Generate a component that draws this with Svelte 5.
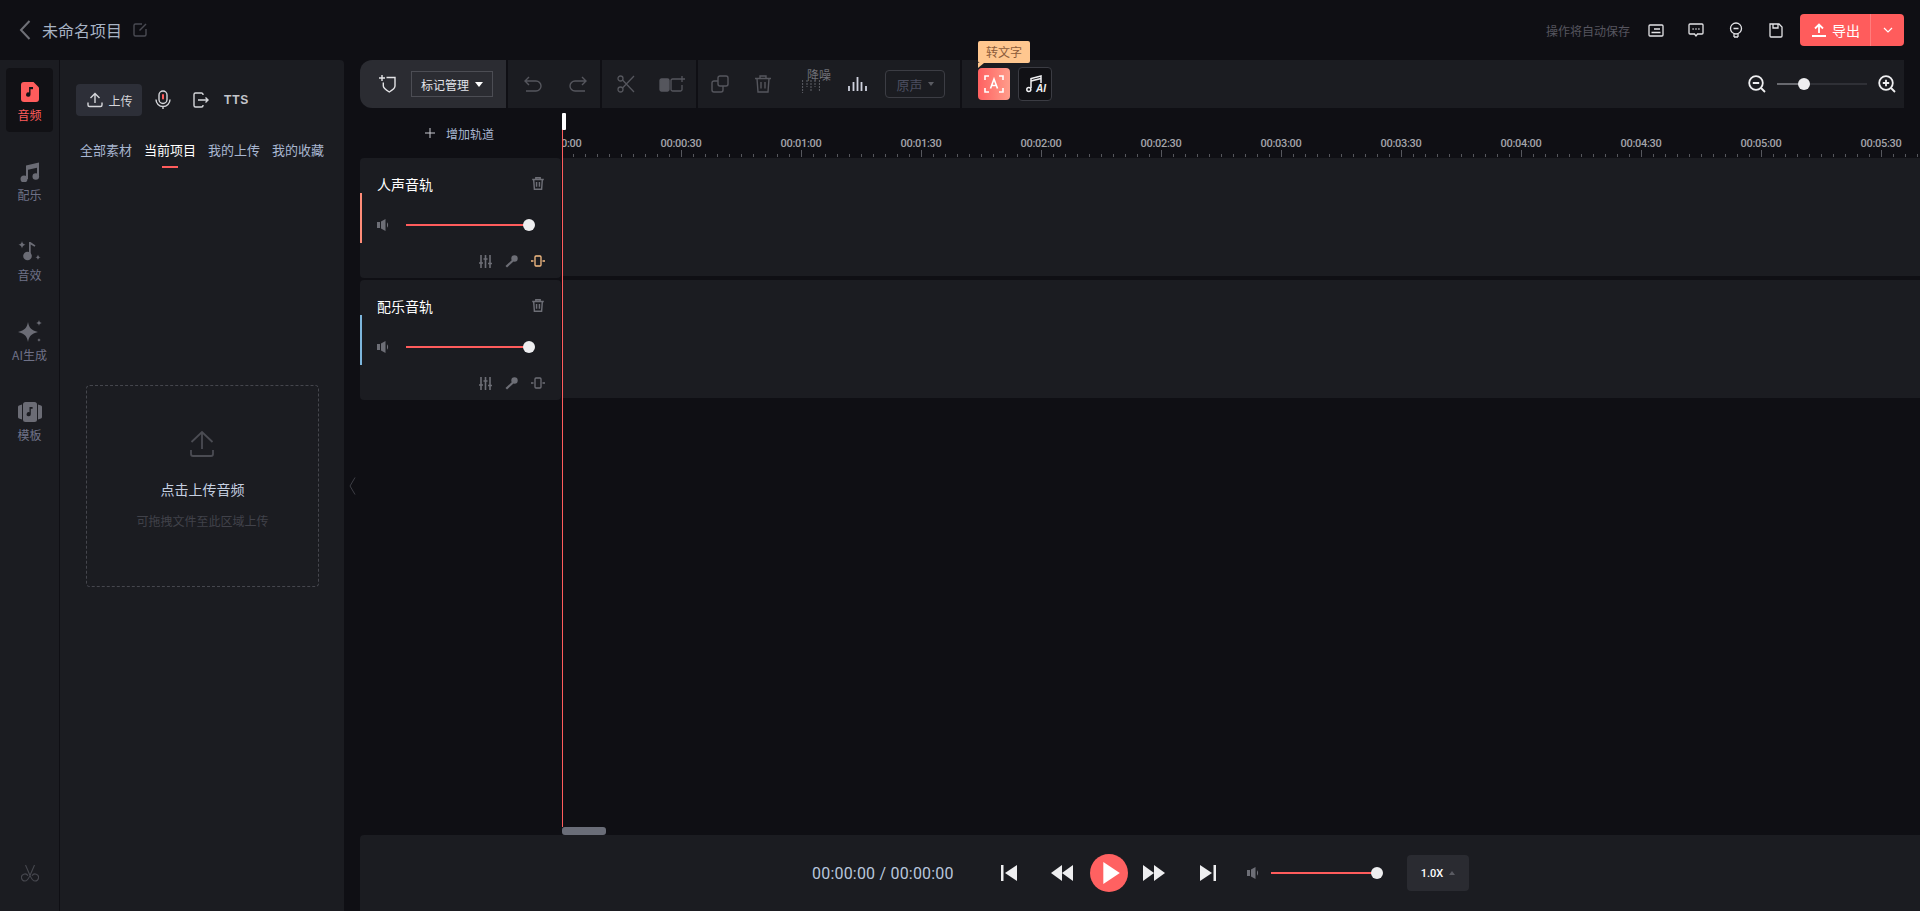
<script>
    const tabs = ["全部素材", "当前项目", "我的上传", "我的收藏"];
    const tracks = [
        { name: "人声音轨", color: "#ff8c78", clipColor: "#f7bd84" },
        { name: "配乐音轨", color: "#7db6dc", clipColor: "#6d6e76" },
    ];
    const marks = [
        "00:00:00", "00:00:30", "00:01:00", "00:01:30", "00:02:00", "00:02:30",
        "00:03:00", "00:03:30", "00:04:00", "00:04:30", "00:05:00", "00:05:30",
    ];
</script>

<div class="page">
    <header class="top">
        <div class="top-left">
            <svg class="back" width="12" height="20" viewBox="0 0 12 20" fill="none" stroke="#6f7077" stroke-width="2"><path d="M10.5 1 2 10l8.5 9" /></svg>
            <span class="title">未命名项目</span>
            <svg width="14" height="14" viewBox="0 0 14 14" fill="none" stroke="#4a4b53" stroke-width="1.4"><path d="M9 1H2.500A1.500 1.500 0 0 0 1 2.500v9A1.500 1.500 0 0 0 2.500 13h9a1.500 1.500 0 0 0 1.500-1.500V6" /><path d="M6.500 7.500 13 1" /></svg>
        </div>
        <div class="top-right">
            <span class="autosave">操作将自动保存</span>
            <button class="top-icon" aria-label="字幕">
                <svg width="16" height="13" viewBox="0 0 16 13" fill="none" stroke="#e3e3e6" stroke-width="1.300"><rect x="1" y="1" width="14" height="11" rx="1" /><path d="M6 5h6M3.500 8.500h9" /></svg>
            </button>
            <button class="top-icon" aria-label="反馈">
                <svg width="16" height="15" viewBox="0 0 16 15" fill="none" stroke="#e3e3e6" stroke-width="1.300"><path d="M2 1h12a1 1 0 0 1 1 1v8a1 1 0 0 1-1 1H9.500L8 13 6.500 11H2a1 1 0 0 1-1-1V2a1 1 0 0 1 1-1z" /><path d="M4.500 6h1.200M7.400 6h1.200M10.300 6h1.200" /></svg>
            </button>
            <button class="top-icon" aria-label="提示">
                <svg width="14" height="16" viewBox="0 0 14 16" fill="none" stroke="#e3e3e6" stroke-width="1.300"><circle cx="7" cy="6.500" r="5.500" /><path d="M5 15h4M5 12v3M9 12v3M4.500 6.500h5" /></svg>
            </button>
            <button class="top-icon" aria-label="保存">
                <svg width="14" height="15" viewBox="0 0 14 15" fill="none" stroke="#e3e3e6" stroke-width="1.300"><path d="M1 1h9l3 3v9a1 1 0 0 1-1 1H2a1 1 0 0 1-1-1z" /><path d="M4 1v4h5V1" /></svg>
            </button>
            <div class="export">
                <button class="export-main">
                    <svg width="14" height="14" viewBox="0 0 14 14" fill="none" stroke="#fff" stroke-width="1.800"><path d="M7 10V1.500M3 5.500l4-4 4 4M0 13h14" /></svg>
                    导出
                </button>
                <button class="export-more" aria-label="更多">
                    <svg width="10" height="6" viewBox="0 0 10 6" fill="none" stroke="#fff" stroke-width="1.200"><path d="m1 1 4 4 4-4" /></svg>
                </button>
            </div>
        </div>
    </header>

    <div class="main">
        <aside class="side">
            <nav class="nav">
                <div class="nav-item active">
                    <svg width="18" height="20" viewBox="0 0 18 20"><path d="M3 0h9.500L18 5.500V17a3 3 0 0 1-3 3H3a3 3 0 0 1-3-3V3a3 3 0 0 1 3-3z" fill="#ff5c5c" /><path d="M9.500 5v7.500a2.200 2.200 0 1 1-1.400-2V5z" fill="#111115" /><path d="M9 5h3v2.200H9z" fill="#111115" /></svg>
                    <span>音频</span>
                </div>
                <div class="nav-item">
                    <svg width="20" height="20" viewBox="0 0 20 20" fill="#6b6c75"><path d="M6 3.500 19 .5v14h-2V5.800L8 7.800V17H6z" /><circle cx="4" cy="17" r="3.500" /><circle cx="15.800" cy="14.500" r="3.300" /></svg>
                    <span>配乐</span>
                </div>
                <div class="nav-item">
                    <svg width="24" height="22" viewBox="0 0 24 22" fill="#6b6c75"><path d="M4 0c.4 2.300 1.200 3.200 3.500 3.800C5.200 4.300 4.500 5.200 4 7.600c-.5-2.400-1.200-3.300-3.500-3.800C2.800 3.200 3.600 2.300 4 0z" /><path d="M20 13.500c.3 1.700.9 2.400 2.800 2.800-1.900.4-2.500 1.100-2.800 2.800-.3-1.700-.9-2.400-2.800-2.800 1.900-.4 2.500-1.100 2.800-2.800z" /><path d="M11 1h1.500l5 3.500-1 1.300-3.800-2.400V15h-1.700z" /><circle cx="9.500" cy="15" r="4.300" /></svg>
                    <span>音效</span>
                </div>
                <div class="nav-item">
                    <svg width="24" height="24" viewBox="0 0 24 24" fill="#6b6c75"><path d="M10 2c1.100 6 3 8 10 10-7 2-8.900 4-10 10C8.900 16 7 14 0 12c7-2 8.900-4 10-10z" /><path d="M21 0c.3 1.700.9 2.400 2.800 3C21.900 3.500 21.300 4.200 21 6c-.3-1.800-.9-2.500-2.800-3C20.100 2.400 20.700 1.700 21 0z" /><path d="M21 18c.2 1.200.6 1.700 2 2-1.400.3-1.800.8-2 2-.2-1.200-.6-1.700-2-2 1.400-.3 1.800-.8 2-2z" /></svg>
                    <span>AI生成</span>
                </div>
                <div class="nav-item">
                    <svg width="24" height="22" viewBox="0 0 24 22"><path d="M4 3.500v15L1 17.500a1.500 1.500 0 0 1-1-1.400V5.900a1.500 1.500 0 0 1 1-1.400zM20 3.500v15l3-1a1.500 1.500 0 0 0 1-1.400V5.900a1.500 1.500 0 0 0-1-1.400z" fill="#6b6c75" /><rect x="5" y="1" width="14" height="20" rx="2.500" fill="#6b6c75" /><path d="M12.800 6v7.200a2.100 2.100 0 1 1-1.300-1.900V6z" fill="#1b1c21" /><path d="M12 6h2.600v1.800H12z" fill="#1b1c21" /></svg>
                    <span>模板</span>
                </div>
                <svg class="nav-cut" width="18" height="20" viewBox="0 0 18 20" fill="none" stroke="#46474e" stroke-width="1.100"><path d="M4.500 0 9 10.500c1.500 3 2.300 5.500 5 5.500a3.500 3.500 0 1 0-3-5.200M13.500 0 9 10.500c-1.500 3-2.300 5.500-5 5.500a3.500 3.500 0 1 1 3-5.200" /></svg>
            </nav>

            <section class="assets">
                <div class="asset-tools">
                    <button class="upload">
                        <svg width="16" height="16" viewBox="0 0 16 16" fill="none" stroke="#d5d6da" stroke-width="1.400"><path d="M8 11V1.500M3.500 6 8 1.500 12.500 6M1 10.500V13a1.500 1.500 0 0 0 1.500 1.500h11A1.500 1.500 0 0 0 15 13v-2.500" /></svg>
                        上传
                    </button>
                    <svg class="asset-mic" width="16" height="20" viewBox="0 0 16 20" fill="none" stroke="#d5d6da" stroke-width="1.400"><rect x="4" y="1" width="8" height="12.500" rx="4" /><rect x="7" y="4" width="2" height="5.500" rx="1" fill="#ff5c5c" stroke="none" /><path d="M1 9.500a7 7 0 0 0 14 0M8 16.500V19" /></svg>
                    <svg class="asset-tts" width="16" height="16" viewBox="0 0 16 16" fill="none" stroke="#d5d6da" stroke-width="1.400"><path d="M10 3V2.500A1.500 1.500 0 0 0 8.500 1h-6A1.500 1.500 0 0 0 1 2.500v11A1.500 1.500 0 0 0 2.500 15h6a1.500 1.500 0 0 0 1.500-1.500V13M5 8h10M12.500 5.500 15 8l-2.500 2.500" /></svg>
                    <span class="tts">TTS</span>
                </div>
                <div class="tabs">
                    {#each tabs as tab, i}
                        <div class="tab" class:on={i === 1}>{tab}</div>
                    {/each}
                </div>
                <div class="drop">
                    <svg width="24" height="28" viewBox="0 0 24 28" fill="none" stroke="#4b4c53" stroke-width="1.800"><path d="M12 19V2M1.500 12 12 2l10.500 10M1 20v4a2 2 0 0 0 2 2h18a2 2 0 0 0 2-2v-4" /></svg>
                    <p class="drop-title">点击上传音频</p>
                    <p class="drop-sub">可拖拽文件至此区域上传</p>
                </div>
            </section>
        </aside>

        <div class="gutter">
            <svg width="7" height="18" viewBox="0 0 7 18" fill="none" stroke="#3e3f46" stroke-width="1"><path d="M6 .5 1 9l5 8.500" /></svg>
        </div>

        <div class="work">
            <div class="toolbar">
                <div class="tb mark">
                    <svg width="18" height="18" viewBox="0 0 18 18" fill="none" stroke="#e4e4e7" stroke-width="1.400"><path d="M7.500 2.500H16v8.500c0 2-3.200 4.500-5.700 6-2.500-1.500-6-4-6-6V7.500" /><path d="M0 3h6M3 0v6" /></svg>
                    <button class="mark-btn">标记管理<i class="caret white"></i></button>
                </div>
                <div class="tb undo">
                    <button class="tool w45" aria-label="撤销">
                        <svg width="18" height="16" viewBox="0 0 18 16" fill="none" stroke="#55565d" stroke-width="1.400"><path d="M5 1 1 5l4 4M1 5h11a4.500 4.500 0 0 1 0 10H2" /></svg>
                    </button>
                    <button class="tool w45" aria-label="重做">
                        <svg width="18" height="16" viewBox="0 0 18 16" fill="none" stroke="#55565d" stroke-width="1.400"><path d="m13 1 4 4-4 4M17 5H6a4.500 4.500 0 0 0 0 10h10" /></svg>
                    </button>
                </div>
                <div class="tb cut">
                    <button class="tool w46" aria-label="剪切">
                        <svg width="18" height="18" viewBox="0 0 18 18" fill="none" stroke="#55565d" stroke-width="1.300"><circle cx="3.500" cy="3.500" r="2.500" /><circle cx="3.500" cy="14.500" r="2.500" /><path d="M5.500 5 17 17M5.500 13 17 1" /></svg>
                    </button>
                    <button class="tool w46" aria-label="添加片段">
                        <svg width="26" height="16" viewBox="0 0 26 16" fill="none" stroke="#55565d" stroke-width="1.300"><rect x="1" y="3" width="9" height="12" rx="1.500" fill="#55565d" /><path d="M20 3h-6.500A1.500 1.500 0 0 0 12 4.500v9a1.500 1.500 0 0 0 1.500 1.500h8a1.500 1.500 0 0 0 1.500-1.500V9M23 0v6M20 3h6" /></svg>
                    </button>
                </div>
                <div class="tb edit">
                    <button class="tool w44" aria-label="复制">
                        <svg width="18" height="18" viewBox="0 0 18 18" fill="none" stroke="#55565d" stroke-width="1.400"><rect x="7" y="1" width="10" height="10" rx="2" /><path d="M7 6H3a2 2 0 0 0-2 2v7a2 2 0 0 0 2 2h7a2 2 0 0 0 2-2v-4" /></svg>
                    </button>
                    <button class="tool w42" aria-label="删除">
                        <svg width="16" height="18" viewBox="0 0 16 18" fill="none" stroke="#55565d" stroke-width="1.400"><path d="M0 3.500h16M5 3.500V1h6v2.500M2 3.500 3 17h10l1-13.500M6 7v6.500M10 7v6.500" /></svg>
                    </button>
                    <div class="denoise">
                        <span>降噪</span>
                        <svg width="18" height="15" viewBox="0 0 18 15" stroke="#55565d" stroke-width="1.200"><path d="M.5 2v13M5 2v7M9 2v11M13 2v7M17.500 2v12" stroke-dasharray="2 1" /></svg>
                    </div>
                    <button class="tool w36" aria-label="音量均衡">
                        <svg width="19" height="14" viewBox="0 0 19 14" stroke="#cfd2de" stroke-width="1.800"><path d="M1 14V9M5.500 14V5M9.500 14V0M13.500 14V5M18 14V9" /></svg>
                    </button>
                    <button class="origin">原声<i class="caret grey"></i></button>
                </div>
                <div class="tb ai">
                    <div class="speech-wrap">
                        <span class="tip">转文字</span>
                        <button class="speech" aria-label="转文字">
                            <svg width="20" height="18" viewBox="0 0 20 18" fill="none" stroke="#fff" stroke-width="1.600"><path d="M1 5V1h4M15 1h4v4M1 13v4h4M15 17h4v-4" /><path d="M6.500 13.500 10 4l3.500 9.500M7.700 10.500h4.600" /></svg>
                        </button>
                    </div>
                    <button class="music-ai" aria-label="AI 音乐">
                        <svg width="18" height="18" viewBox="0 0 18 18" fill="none" stroke="#f1f1f3" stroke-width="1.500"><path d="M5 13V3.500L15 1v7" /><path d="M5 6l10-2.500" /><circle cx="2.800" cy="14.500" r="2" /></svg>
                        <span>AI</span>
                    </button>
                    <div class="zoom">
                        <svg width="18" height="18" viewBox="0 0 18 18" fill="none" stroke="#efeff1" stroke-width="1.800"><circle cx="8" cy="8" r="6.800" /><path d="M4.800 8h6.400M13 13l4 4" /></svg>
                        <div class="zoom-slider">
                            <div class="zoom-fill"></div>
                            <div class="knob"></div>
                        </div>
                        <svg width="18" height="18" viewBox="0 0 18 18" fill="none" stroke="#efeff1" stroke-width="1.800"><circle cx="8" cy="8" r="6.800" /><path d="M4.800 8h6.400M8 4.800v6.400M13 13l4 4" /></svg>
                    </div>
                </div>
            </div>

            <div class="timeline">
                <div class="heads">
                    <div class="add-track">
                        <svg width="10" height="10" viewBox="0 0 10 10" stroke="#c9cad0" stroke-width="1"><path d="M5 0v10M0 5h10" /></svg>
                        增加轨道
                    </div>
                    {#each tracks as track}
                        <div class="head" style="--bar: {track.color}">
                            <div class="head-top">
                                <span>{track.name}</span>
                                <svg width="12" height="13" viewBox="0 0 16 18" fill="none" stroke="#6d6e76" stroke-width="2"><path d="M0 3.500h16M5 3.500V1h6v2.500M2 3.500 3 17h10l1-13.500M6 7v6.500M10 7v6.500" /></svg>
                            </div>
                            <div class="head-vol">
                                <svg width="13" height="12" viewBox="0 0 13 12" fill="#6d6e76"><path d="M0 3h3v6H0zM4 2.500 8.500 0v12L4 9.500zM10 3.500c1.500.5 1.500 4.500 0 5z" /></svg>
                                <div class="slider"><div class="knob end"></div></div>
                            </div>
                            <div class="head-tools">
                                <svg width="13" height="13" viewBox="0 0 13 13" stroke="#6d6e76" stroke-width="1.600"><path d="M2 0v13M6.500 0v13M11 0v13M0 8h4M4.500 4h4M9 8.500h4" /></svg>
                                <svg width="13" height="13" viewBox="0 0 13 13" fill="#6d6e76"><circle cx="9.500" cy="3.500" r="3.200" /><path d="M7 5 0.500 11 2 12.500 8.500 6.500z" /></svg>
                                <svg width="14" height="12" viewBox="0 0 14 12" fill="none" stroke={track.clipColor} stroke-width="1.300"><rect x="4" y="1" width="6" height="10" rx="1" /><path d="M0 6h2.500M11.500 6H14" /></svg>
                            </div>
                        </div>
                    {/each}
                </div>
                <div class="lanes">
                    <div class="ruler">
                        <div class="marks">
                            {#each marks as mark}
                                <span>{mark}</span>
                            {/each}
                        </div>
                        <div class="ticks"></div>
                    </div>
                    <div class="lane"></div>
                    <div class="lane"></div>
                    <div class="thumb"></div>
                </div>
                <div class="playhead"></div>
            </div>

            <div class="player">
                <span class="time">00:00:00 / 00:00:00</span>
                <div class="transport">
                    <svg class="skip-prev" width="18" height="18" viewBox="0 0 18 18" fill="#eeeef0"><path d="M1 1h2.500v16H1zM17 1v16L5 9z" /></svg>
                    <svg class="rewind" width="24" height="18" viewBox="0 0 24 18" fill="#eeeef0"><path d="M12 1v16L1 9zM23 1v16L12 9z" /></svg>
                    <div class="play"><svg width="18" height="22" viewBox="0 0 16 20" fill="#fff"><path d="M1 0v20l15-10z" /></svg></div>
                    <svg class="forward" width="24" height="18" viewBox="0 0 24 18" fill="#eeeef0"><path d="M1 1v16l11-8zM12 1v16l11-8z" /></svg>
                    <svg class="skip-next" width="18" height="18" viewBox="0 0 18 18" fill="#eeeef0"><path d="M1 1v16l12-8zM14.500 1H17v16h-2.500z" /></svg>
                </div>
                <svg class="vol-icon" width="13" height="12" viewBox="0 0 13 12" fill="#6d6e76"><path d="M0 3h3v6H0zM4 2.500 8.500 0v12L4 9.500zM10 3.500c1.500.5 1.500 4.500 0 5z" /></svg>
                <div class="slider vol"><div class="knob end"></div></div>
                <button class="speed">1.0X<i class="caret up"></i></button>
            </div>
        </div>
    </div>
</div>

<style>
    :global(body) {
        background: #0f0f14;
        font-family: "Noto Sans CJK SC", "Noto Sans", sans-serif;
        overflow: hidden;
    }

    button {
        background: none;
        border: 0;
        padding: 0;
        font: inherit;
        color: inherit;
    }

    .page {
        height: 911px;
        display: flex;
        flex-direction: column;
        background: #0f0f14;
        color: #fff;
    }

    /* header */
    .top {
        height: 60px;
        flex: none;
        display: flex;
        align-items: center;
        justify-content: space-between;
        padding: 0 16px 0 19px;
    }

    .top-left {
        display: flex;
        align-items: center;
    }

    .title {
        margin: 0 11px;
        font-size: 16px;
        color: #a8b3c4;
    }

    .top-right {
        display: flex;
        align-items: center;
    }

    .autosave {
        font-size: 12px;
        color: #56555f;
        margin-right: 6px;
    }

    .top-icon {
        width: 40px;
        height: 32px;
        display: flex;
        align-items: center;
        justify-content: center;
    }

    .export {
        display: flex;
        height: 32px;
        margin-left: 4px;
        background: #ff5c5c;
        border-radius: 4px;
    }

    .export-main {
        width: 71px;
        padding-left: 12px;
        display: flex;
        align-items: center;
        gap: 6px;
        font-size: 14px;
        border-right: 1px solid #ff7d7d;
    }

    .export-more {
        width: 33px;
        display: flex;
        align-items: center;
        justify-content: center;
    }

    .main {
        flex: 1;
        display: flex;
        min-height: 0;
    }

    /* left panel */
    .side {
        width: 344px;
        flex: none;
        display: flex;
        background: #1b1c21;
        border-radius: 0 4px 0 0;
    }

    .nav {
        width: 60px;
        flex: none;
        box-sizing: border-box;
        border-right: 1px solid #0f0f14;
        padding: 8px 6px 0;
        display: flex;
        flex-direction: column;
        gap: 16px;
        position: relative;
    }

    .nav-item {
        height: 64px;
        border-radius: 4px;
        display: flex;
        flex-direction: column;
        align-items: center;
        font-size: 12px;
        color: #6f7288;
        position: relative;
    }

    .nav-item svg {
        position: absolute;
        top: 24px;
        transform: translateY(-50%);
    }

    .nav-item span {
        position: absolute;
        top: 37px;
        line-height: 20px;
        white-space: nowrap;
    }

    .nav-item.active {
        background: #111115;
        color: #ff5c5c;
    }

    .nav-cut {
        position: absolute;
        left: 21px;
        bottom: 26px;
    }

    .assets {
        flex: 1;
        padding: 24px 16px 0;
        display: flex;
        flex-direction: column;
        min-width: 0;
    }

    .asset-tools {
        height: 32px;
        display: flex;
        align-items: center;
    }

    .upload {
        width: 66px;
        height: 32px;
        padding-left: 2px;
        box-sizing: border-box;
        background: #2d2f38;
        border-radius: 4px;
        display: flex;
        align-items: center;
        justify-content: center;
        gap: 5px;
        font-size: 12px;
        color: #d5d6da;
    }

    .asset-mic {
        margin-left: 13px;
    }

    .asset-tts {
        margin-left: 22px;
    }

    .tts {
        margin-left: 15px;
        font-family: "Liberation Sans", sans-serif;
        font-size: 12px;
        font-weight: 700;
        letter-spacing: 0.8px;
        color: #c4c5ca;
    }

    .tabs {
        display: flex;
        gap: 12px;
        margin-top: 24px;
        padding-left: 4px;
    }

    .tab {
        position: relative;
        font-size: 13px;
        line-height: 20px;
        color: #a8b6d0;
    }

    .tab.on {
        color: #fff;
    }

    .tab.on::after {
        content: "";
        position: absolute;
        left: 18px;
        bottom: -8px;
        width: 16px;
        height: 2px;
        background: #ff5c5c;
    }

    .drop {
        width: 233px;
        height: 202px;
        margin: 225px 0 0 10px;
        box-sizing: border-box;
        border: 1px dashed #45464d;
        border-radius: 4px;
        display: flex;
        flex-direction: column;
        align-items: center;
        padding-top: 44px;
    }

    .drop svg {
        margin-right: 2px;
    }

    .drop-title {
        margin: 21px 0 0;
        font-size: 14px;
        line-height: 20px;
        color: #c5cfe0;
    }

    .drop-sub {
        margin: 13px 0 0;
        font-size: 12px;
        line-height: 18px;
        color: #41424a;
    }

    .gutter {
        width: 16px;
        flex: none;
        display: flex;
        align-items: flex-start;
        justify-content: center;
        padding-top: 417px;
        box-sizing: border-box;
    }

    /* right side */
    .work {
        flex: 1;
        min-width: 0;
        display: flex;
        flex-direction: column;
    }

    .toolbar {
        height: 48px;
        flex: none;
        margin-right: 16px;
        display: flex;
        gap: 2px;
    }

    .tb {
        background: #1b1c21;
        display: flex;
        align-items: center;
    }

    .mark {
        width: 146px;
        background: #2b2c32;
        border-radius: 12px 0 0 12px;
        padding-left: 19px;
        box-sizing: border-box;
    }

    .mark-btn {
        margin-left: 14px;
        width: 82px;
        height: 26px;
        border: 1px solid #4c4d54;
        display: flex;
        align-items: center;
        justify-content: center;
        gap: 6px;
        font-size: 12px;
        color: #e2e4ea;
    }

    .undo {
        width: 92px;
        padding-left: 2px;
        box-sizing: border-box;
    }

    .cut {
        width: 94px;
        padding-left: 1px;
        box-sizing: border-box;
    }

    .edit {
        width: 262px;
    }

    .tool {
        height: 48px;
        display: flex;
        align-items: center;
        justify-content: center;
    }

    .w45 { width: 45px; }
    .w46 { width: 46px; }
    .w44 { width: 44px; }
    .w42 { width: 42px; }
    .w36 { width: 36px; }

    .denoise {
        width: 40px;
        margin: 0 0 6px 15px;
        display: flex;
        flex-direction: column;
        align-items: center;
        font-size: 12px;
        line-height: 12px;
        color: #6f7077;
    }

    .denoise svg {
        margin: -3px 16px 0 0;
    }

    .origin {
        width: 60px;
        height: 28px;
        margin-left: 10px;
        border: 1px solid #3c3d44;
        border-radius: 4px;
        display: flex;
        align-items: center;
        justify-content: center;
        gap: 5px;
        font-size: 13px;
        color: #4b4e60;
    }

    .ai {
        flex: 1;
        padding: 0 8px 0 16px;
        gap: 8px;
    }

    .speech-wrap {
        position: relative;
    }

    .speech {
        width: 32px;
        height: 32px;
        border-radius: 4px;
        background: linear-gradient(90deg, #ff6161, #ff9d8b);
        display: flex;
        align-items: center;
        justify-content: center;
    }

    .tip {
        position: absolute;
        left: 0;
        top: -27px;
        width: 52px;
        height: 22px;
        background: #ffc78f;
        border-radius: 2px;
        font-size: 12px;
        line-height: 22px;
        text-align: center;
        color: #8c5b3a;
    }

    .tip::after {
        content: "";
        position: absolute;
        left: 0;
        bottom: -5px;
        border-left: 6px solid #ffc78f;
        border-bottom: 5px solid transparent;
    }

    .music-ai {
        position: relative;
        width: 34px;
        height: 34px;
        background: #111115;
        border: 1px solid #3b3c43;
        border-radius: 4px;
        display: flex;
        justify-content: center;
        padding-top: 7px;
        box-sizing: border-box;
    }

    .music-ai span {
        position: absolute;
        right: 5px;
        bottom: 6px;
        font-family: "Liberation Sans", sans-serif;
        font-size: 10px;
        line-height: 10px;
        font-weight: 700;
        font-style: italic;
        color: #f1f1f3;
    }

    .zoom {
        margin-left: auto;
        display: flex;
        align-items: center;
        gap: 11px;
    }

    .zoom-slider {
        position: relative;
        width: 90px;
        height: 2px;
        background: #2f3036;
    }

    .zoom-fill {
        width: 27px;
        height: 2px;
        background: #68696f;
    }

    .zoom-slider .knob {
        position: absolute;
        left: 21px;
        top: -5px;
    }

    .knob {
        width: 12px;
        height: 12px;
        border-radius: 50%;
        background: #eeeef0;
    }

    .timeline {
        flex: 1;
        min-height: 0;
        display: flex;
        position: relative;
    }

    .heads {
        width: 201px;
        flex: none;
        margin-right: 1px;
    }

    .add-track {
        height: 50px;
        display: flex;
        align-items: center;
        justify-content: center;
        gap: 11px;
        font-size: 12px;
        color: #a8b6d0;
        padding-right: 2px;
        box-sizing: border-box;
    }

    .head {
        position: relative;
        height: 120px;
        margin-bottom: 2px;
        background: #1b1c21;
        border-radius: 4px;
        padding: 0 17px;
        box-sizing: border-box;
    }

    .head::before {
        content: "";
        position: absolute;
        left: 0;
        top: 35px;
        width: 2px;
        height: 50px;
        background: var(--bar);
    }

    .head-top {
        height: 52px;
        padding-top: 14px;
        box-sizing: border-box;
        display: flex;
        justify-content: space-between;
        align-items: flex-start;
        font-size: 14px;
        line-height: 24px;
        color: #fff;
    }

    .head-top svg {
        margin-top: 5px;
    }

    .head-vol {
        height: 30px;
        display: flex;
        align-items: center;
        gap: 16px;
        margin-right: 15px;
    }

    .slider {
        position: relative;
        flex: 1;
        height: 2px;
        background: #ff5c5c;
    }

    .knob.end {
        position: absolute;
        right: -6px;
        top: -5px;
    }

    .head-tools {
        display: flex;
        justify-content: flex-end;
        align-items: center;
        gap: 13px;
        margin-top: 14px;
        margin-right: -1px;
        height: 14px;
    }

    .lanes {
        flex: 1;
        min-width: 0;
        position: relative;
        overflow: hidden;
    }

    .ruler {
        height: 50px;
        position: relative;
    }

    .marks {
        display: flex;
        margin-left: -61px;
        padding-top: 28px;
        font-family: Roboto, sans-serif;
        font-size: 11px;
        font-weight: 500;
        letter-spacing: -0.3px;
        line-height: 16px;
        color: #a3a4aa;
    }

    .marks span {
        width: 120px;
        flex: none;
        text-align: center;
    }

    .ticks {
        position: absolute;
        left: 0;
        right: 0;
        bottom: 1px;
        height: 8px;
        background:
            linear-gradient(90deg, #56575d 1px, transparent 1px) -1px 100% / 120px 7px repeat-x,
            linear-gradient(90deg, #56575d 1px, transparent 1px) -1px 100% / 12px 3px repeat-x;
    }

    .lane {
        height: 118px;
        background: #1b1c21;
        margin-bottom: 4px;
    }

    .thumb {
        position: absolute;
        left: 0;
        bottom: 0;
        width: 44px;
        height: 8px;
        border-radius: 3px;
        background: #6a6d78;
    }

    .playhead {
        position: absolute;
        left: 202px;
        top: 12px;
        bottom: 8px;
        width: 1px;
        background: #ff5c5c;
    }

    .playhead::before {
        content: "";
        position: absolute;
        left: 0;
        top: -7px;
        width: 4px;
        height: 17px;
        background: #fff;
        border-radius: 1px;
    }

    /* player */
    .player {
        height: 76px;
        flex: none;
        background: #1b1c21;
        border-radius: 4px 0 0 0;
        display: flex;
        align-items: center;
        padding-left: 452px;
    }

    .time {
        width: 144px;
        font-family: Roboto, sans-serif;
        font-size: 16px;
        letter-spacing: 0.2px;
        white-space: nowrap;
        color: #b8c6dc;
    }

    .transport {
        display: flex;
        align-items: center;
        margin-left: 44px;
    }

    .rewind {
        margin-left: 32px;
    }

    .play {
        width: 38px;
        height: 38px;
        margin: 0 14px 0 16px;
        border-radius: 50%;
        background: #ff6161;
        display: flex;
        align-items: center;
        justify-content: center;
        padding-left: 3px;
        box-sizing: border-box;
    }

    .skip-next {
        margin-left: 33px;
    }

    .vol-icon {
        margin-left: 30px;
    }

    .slider.vol {
        flex: none;
        width: 106px;
        margin-left: 11px;
    }

    .speed {
        width: 62px;
        height: 36px;
        margin-left: 30px;
        background: #2a2b31;
        border-radius: 4px;
        display: flex;
        align-items: center;
        justify-content: center;
        gap: 6px;
        font-family: Roboto, sans-serif;
        font-size: 11px;
        font-weight: 500;
    }

    .caret {
        display: inline-block;
        border-left: 4px solid transparent;
        border-right: 4px solid transparent;
        border-top: 5px solid #fff;
    }

    .caret.grey {
        border-left-width: 3px;
        border-right-width: 3px;
        border-top: 4px solid #5a5b62;
    }

    .caret.up {
        border-left-width: 3px;
        border-right-width: 3px;
        border-top: 0;
        border-bottom: 4px solid #5a5b62;
    }
</style>
